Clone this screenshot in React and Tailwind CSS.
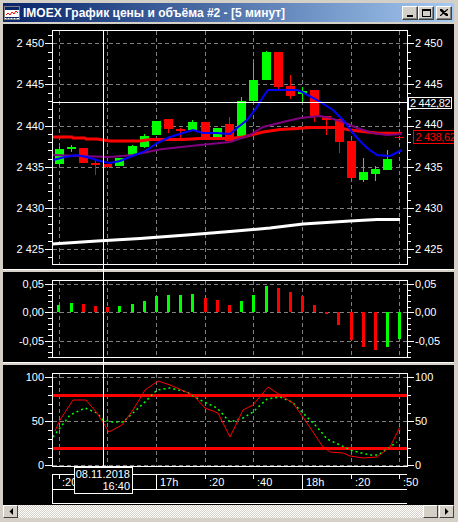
import React from "react";

const FONT = "'Liberation Sans', Arial, sans-serif";
const GX = [59, 107, 156, 205, 253, 302, 351, 399];
const py = (p) => 43.3 + (2450 - p) * 8.23;

const candles = [
  [59, "g", 149, 164, 147, 165],
  [71, "g", 147, 149, 145, 152],
  [83, "r", 148, 163, 148, 163],
  [95, "r", 162.5, 164, 160, 175],
  [107, "r", 164, 167, 164, 167],
  [119, "g", 158, 166, 158, 166],
  [132, "g", 146, 155, 145, 155],
  [144, "g", 136, 147, 134, 148],
  [156, "g", 121, 135, 121, 135],
  [168, "r", 119, 129, 119, 133],
  [180, "r", 128.5, 130, 128, 141],
  [192, "g", 122, 130, 120, 130],
  [205, "r", 122, 139, 122, 139],
  [217, "g", 128, 138, 128, 138],
  [229, "r", 124, 141, 117, 141],
  [241, "g", 101, 138, 97, 138],
  [253, "g", 80, 101, 63, 101],
  [266, "g", 52, 80, 51, 80],
  [278, "r", 52, 87, 52, 89],
  [290, "r", 86, 96, 75, 99],
  [302, "g", 91, 94, 87, 102],
  [314, "r", 90, 117, 90, 122],
  [326, "r", 116, 120, 116, 135],
  [339, "r", 119, 142, 119, 153],
  [351, "r", 141, 178, 140, 178],
  [363, "g", 172, 180, 158, 182],
  [375, "g", 169, 174, 166, 181],
  [387, "g", 159, 170, 150, 170],
];

const blue = [[53,160],[65,157],[77,155],[90,158],[100,161],[110,163],[120,161],[127,158],[135,155],[143,152],[150,148],[157,143],[170,137],[183,133],[193,130],[203,133],[217,133],[230,134],[237,128],[247,120],[257,107],[263,97],[268,90],[297,90],[302,92],[317,100],[333,110],[343,120],[353,133],[360,141],[367,148],[377,155],[390,156],[402,150]];
const purple = [[53,155],[80,156],[110,157],[133,155],[157,150],[163,149],[200,145],[230,142],[250,135],[263,127],[283,122],[300,118],[320,116],[330,118],[343,122],[357,128],[373,133],[387,135],[402,134]];
const redMa = [[53,137],[72,137],[73,138],[85,138],[86,139],[97,139],[110,141],[140,141],[150,139.5],[183,139.5],[200,138.5],[230,138.5],[243,137],[263,132],[280,129.5],[297,128.5],[310,127.5],[337,127.5],[350,130],[367,132],[377,133],[402,133.5]];
const whiteMa = [[52,244],[97,241],[140,238.5],[187,235],[230,231.5],[270,228],[303,224],[350,221],[377,219.5],[400,219.5]];

const bars = [
  [58,"g",305],[71,"g",303],[83,"r",304],[95,"r",306],[107,"r",306.7],[119,"g",306],[132,"g",304],[144,"g",301],[156,"g",296],[168,"g",295],[180,"g",295],[192,"g",294],[205,"r",298],[217,"r",299.7],[229,"r",304.7],
  [241,"g",300.7],[253,"g",294.7],[266,"g",286],[278,"r",288],[290,"r",291.7],[302,"r",296],[314,"r",305],[326,"r",314],[338,"r",325],[351,"r",340],[363,"r",347.7],[375,"r",350],[387,"g",347.7],[399,"g",339],
];

const stochK = [[55,431],[60,420],[73,400],[86,400],[97,413],[109,432],[122,425],[133,410],[145,390],[158,381],[170,385],[193,395],[205,408],[218,413],[230,437],[243,410],[253,405],[268,387],[280,395],[293,403],[307,423],[323,447],[330,452],[343,453],[350,456],[363,458],[377,457],[390,447],[400,427]];
const stochD = [[53,437],[60,428],[70,415],[85,408],[97,413],[103,420],[113,422],[123,422],[133,413],[147,400],[157,390],[170,388],[187,392],[200,400],[217,408],[230,422],[243,418],[253,412],[267,399],[280,397],[292,402],[303,413],[317,427],[327,439],[340,445],[353,451],[370,455],[378,455],[390,447],[397,442]];

const pts = (a) => a.map((p) => p.join(",")).join(" ");

function Lbl({ x, y, anchor = "start", fill = "#fff", ls, children }) {
  return (
    <text x={x} y={y + 4} fill={fill} fontSize="11" fontFamily={FONT} textAnchor={anchor} letterSpacing={ls}>
      {children}
    </text>
  );
}

function VGrid({ y1, y2 }) {
  return GX.map((x) => (
    <line key={x} x1={x + 0.5} x2={x + 0.5} y1={y1} y2={y2} stroke="#808080" strokeDasharray="4 3" />
  ));
}

function MainPanel() {
  const minor = [];
  for (let p = 2424; p <= 2451; p++) {
    const y = Math.round(py(p)) + 0.5;
    const major = p % 5 === 0;
    minor.push(
      <g key={p}>
        <line x1={major ? 45 : 48} x2={52} y1={y} y2={y} stroke="#fff" />
        <line x1={407} x2={major ? 414 : 411} y1={y} y2={y} stroke="#fff" />
      </g>
    );
  }
  const labels = [2450, 2445, 2440, 2435, 2430, 2425];
  return (
    <svg width="451" height="245" viewBox="3 24 451 245" className="block shrink-0" shapeRendering="crispEdges">
      <VGrid y1={31} y2={264} />
      {labels.map((p) => (
        <line key={p} x1={53} x2={407} y1={Math.round(py(p)) + 0.5} y2={Math.round(py(p)) + 0.5} stroke="#808080" strokeDasharray="4 3" />
      ))}
      {minor}
      {labels.map((p) => (
        <g key={"l" + p}>
          <Lbl x={44} y={Math.round(py(p))} anchor="end">{String(p).replace(/^(\d)/, "$1 ")}</Lbl>
          {p !== 2440 && <Lbl x={415} y={Math.round(py(p))}>{String(p).replace(/^(\d)/, "$1 ")}</Lbl>}
        </g>
      ))}
      <Lbl x={415} y={Math.round(py(2440)) - 2}>2 440</Lbl>
      <polyline points={pts(whiteMa)} fill="none" stroke="#fff" strokeWidth="3" shapeRendering="auto" />
      {candles.map(([x, c, bt, bb, wt, wb]) => {
        const col = c === "g" ? "#00ff00" : "#ff0000";
        return (
          <g key={x}>
            <line x1={x + 0.5} x2={x + 0.5} y1={wt} y2={wb} stroke={col} />
            <rect x={x - 4} y={bt} width={9} height={Math.max(2, bb - bt)} fill={col} />
          </g>
        );
      })}
      <polyline points={pts(redMa)} fill="none" stroke="#ff0000" strokeWidth="3" shapeRendering="auto" />
      <polyline points={pts(purple)} fill="none" stroke="#800080" strokeWidth="2" shapeRendering="auto" />
      <polyline points={pts(blue)} fill="none" stroke="#0000ff" strokeWidth="2" shapeRendering="auto" />
      <line x1={395} x2={404} y1={137.5} y2={137.5} stroke="#ff0000" strokeWidth="1" />
      <rect x={52.5} y={30.5} width={354.5} height={233.5} fill="none" stroke="#fff" />
      <line x1={52} x2={408} y1={102.5} y2={102.5} stroke="#fff" />
      <rect x={408.5} y={97.5} width={43} height={11} fill="#000" stroke="#fff" />
      <Lbl x={410} y={103} ls="-0.3">2 442,82</Lbl>
      <rect x={413.5} y={130.5} width={45} height={13} fill="#000" stroke="#ff0000" />
      <Lbl x={415.5} y={137} fill="#ff0000" ls="-0.35">2 438,62</Lbl>
    </svg>
  );
}

function MidPanel() {
  const z = 312.3;
  const per = 28.2 / 5;
  const ticks = [];
  for (let i = -8; i <= 5; i++) {
    const y = Math.round(z - i * per) + 0.5;
    if (y < 280 || y > 358) continue;
    const major = i % 5 === 0;
    ticks.push(
      <g key={i}>
        <line x1={major ? 45 : 48} x2={52} y1={y} y2={y} stroke="#fff" />
        <line x1={407} x2={major ? 414 : 411} y1={y} y2={y} stroke="#fff" />
      </g>
    );
  }
  const lv = [[284, "0,05"], [312, "0,00"], [340.5, "-0,05"]];
  return (
    <svg width="451" height="90" viewBox="3 272 451 90" className="block shrink-0" shapeRendering="crispEdges">
      <VGrid y1={281} y2={357} />
      {lv.map(([y]) => (
        <line key={y} x1={53} x2={407} y1={Math.round(y) + 0.5} y2={Math.round(y) + 0.5} stroke="#808080" strokeDasharray="4 3" />
      ))}
      {ticks}
      {lv.map(([y, t]) => (
        <g key={t}>
          <Lbl x={44} y={Math.round(y)} anchor="end">{t}</Lbl>
          <Lbl x={415} y={Math.round(y)}>{t}</Lbl>
        </g>
      ))}
      {bars.map(([x, c, v]) => {
        const top = Math.min(v, z);
        const h = Math.max(2, Math.abs(v - z));
        return <rect key={x} x={x - 1} y={v < z ? top : 312} width={3} height={h} fill={c === "g" ? "#00ff00" : "#ff0000"} />;
      })}
      <rect x={52.5} y={280.5} width={354.5} height={76.5} fill="none" stroke="#fff" />
    </svg>
  );
}

function BottomPanel() {
  const yv = (v) => 465.3 - v * 0.88;
  const ticks = [];
  for (let v = 0; v <= 100; v += 10) {
    const y = Math.round(yv(v)) + 0.5;
    const major = v % 50 === 0;
    ticks.push(
      <g key={v}>
        <line x1={major ? 45 : 48} x2={52} y1={y} y2={y} stroke="#fff" />
        <line x1={407} x2={major ? 414 : 411} y1={y} y2={y} stroke="#fff" />
      </g>
    );
  }
  const lv = [[100, "100"], [50, "50"], [0, "0"]];
  const tshort = [59, 205, 253, 351, 399];
  const tlabels = [[62, ":20"], [160, "17h"], [209, ":20"], [257, ":40"], [306, "18h"], [355, ":20"], [403, ":50"]];
  return (
    <svg width="451" height="140" viewBox="3 365 451 140" className="block shrink-0" shapeRendering="crispEdges">
      <VGrid y1={374} y2={466} />
      {lv.map(([v]) => (
        <line key={v} x1={53} x2={407} y1={Math.round(yv(v)) + 0.5} y2={Math.round(yv(v)) + 0.5} stroke="#808080" strokeDasharray="4 3" />
      ))}
      {ticks}
      {lv.map(([v, t]) => (
        <g key={t}>
          <Lbl x={44} y={Math.round(yv(v))} anchor="end">{t}</Lbl>
          <Lbl x={415} y={Math.round(yv(v))}>{t}</Lbl>
        </g>
      ))}
      <rect x={52} y={393.5} width={355} height={3} fill="#ff0000" />
      <rect x={52} y={446.5} width={355} height={3} fill="#ff0000" />
      <polyline points={pts(stochD)} fill="none" stroke="#00ff00" strokeWidth="1.5" strokeDasharray="2 3" shapeRendering="auto" />
      <polyline points={pts(stochK)} fill="none" stroke="#ff0000" strokeWidth="1" shapeRendering="auto" />
      <rect x={52.5} y={373.5} width={354.5} height={93} fill="none" stroke="#fff" />
      {/* time axis */}
      <line x1={52} x2={407} y1={474.5} y2={474.5} stroke="#fff" />
      <line x1={52} x2={407} y1={489.5} y2={489.5} stroke="#fff" />
      <line x1={52} x2={407} y1={503.5} y2={503.5} stroke="#fff" />
      <line x1={52.5} x2={52.5} y1={474} y2={504} stroke="#fff" />
      {tshort.map((x) => (
        <line key={x} x1={x + 0.5} x2={x + 0.5} y1={474} y2={479} stroke="#fff" />
      ))}
      <line x1={156.5} x2={156.5} y1={474} y2={489} stroke="#fff" />
      <line x1={302.5} x2={302.5} y1={474} y2={489} stroke="#fff" />
      {tlabels.map(([x, t]) => (
        <Lbl key={x} x={x} y={482}>{t}</Lbl>
      ))}
    </svg>
  );
}

function TitleIcon() {
  return (
    <svg width="16" height="14" viewBox="0 0 16 14" className="shrink-0">
      <rect x="0.5" y="0.5" width="15" height="13" fill="#fff" stroke="#808080" />
      <rect x="1" y="1" width="14" height="3" fill="#0a246a" />
      <polyline points="2,9 4,7 6,9 8,6 10,8 12,5 14,7" fill="none" stroke="#ff0000" strokeWidth="1" />
      <line x1="1" x2="15" y1="11.5" y2="11.5" stroke="#0a246a" />
      <path d="M3 11v2M6 11v2M9 11v2M12 11v2" stroke="#0a246a" />
    </svg>
  );
}

function TBtn({ children, className = "" }) {
  return (
    <div className={"w-[16px] h-[14px] bg-[#d4d0c8] border-t border-l border-t-white border-l-white border-b border-r border-b-[#404040] border-r-[#404040] shadow-[inset_-1px_-1px_0_#808080] flex items-center justify-center " + className}>
      {children}
    </div>
  );
}

function ScrollBtn({ dir }) {
  return (
    <div className="w-[15px] h-full bg-[#d4d0c8] border-t border-l border-t-white border-l-white border-b border-r border-b-[#404040] border-r-[#404040] flex items-center justify-center shrink-0">
      <svg width="4" height="7" viewBox="0 0 4 7">
        {dir === "l" ? <polygon points="4,0 4,7 0.5,3.5" fill="#000" /> : <polygon points="0,0 0,7 3.5,3.5" fill="#000" />}
      </svg>
    </div>
  );
}

export default function App() {
  return (
    <div className="w-[458px] h-[522px] bg-[#d4d0c8] pt-[3px] pl-[3px] pr-[4px] pb-[4px] flex flex-col overflow-hidden">
      <div className="h-[19px] shrink-0 bg-linear-to-r from-[#0a246a] to-[#a6caf0] flex items-center pl-[1px] pr-[2px]">
        <TitleIcon />
        <span className="ml-[3px] text-white font-bold text-[12px] leading-none whitespace-nowrap" style={{ fontFamily: FONT }}>
          IMOEX График цены и объёма #2 - [5 минут]
        </span>
        <div className="ml-auto flex items-center">
          <TBtn>
            <div className="w-[6px] h-[2px] bg-black mt-[6px]" />
          </TBtn>
          <TBtn>
            <div className="w-[9px] h-[8px] border border-black border-t-2" />
          </TBtn>
          <TBtn className="ml-[2px]">
            <svg width="8" height="7" viewBox="0 0 8 7">
              <path d="M0 0L8 7M8 0L0 7M1 0L8 6M0 1L7 7" stroke="#000" strokeWidth="1.2" />
            </svg>
          </TBtn>
        </div>
      </div>
      <div className="mt-[2px] h-[481px] shrink-0 bg-black relative flex flex-col overflow-hidden">
        <MainPanel />
        <div className="h-[3px] shrink-0 bg-[#d4d0c8] border-t border-t-white" />
        <MidPanel />
        <div className="h-[3px] shrink-0 bg-[#d4d0c8] border-t border-t-white" />
        <BottomPanel />
        <div className="absolute left-[100px] top-[6px] w-px h-[437px] bg-white" />
        <div className="absolute left-[71px] top-[443px] w-[59px] h-[27px] bg-black border border-white flex flex-col items-end pr-[2px] text-white text-[11px] leading-[12px]" style={{ fontFamily: FONT }}>
          <span>08.11.2018</span>
          <span>16:40</span>
        </div>
      </div>
      <div className="h-[13px] shrink-0 flex">
        <ScrollBtn dir="l" />
        <div className="flex-1 bg-[repeating-conic-gradient(#ffffff_0_25%,#d4d0c8_0_50%)] bg-[length:2px_2px]" />
        <div className="w-[15px] h-full bg-[#d4d0c8] border-t border-l border-t-white border-l-white border-b border-r border-b-[#404040] border-r-[#404040] mr-px" />
        <ScrollBtn dir="r" />
      </div>
    </div>
  );
}
